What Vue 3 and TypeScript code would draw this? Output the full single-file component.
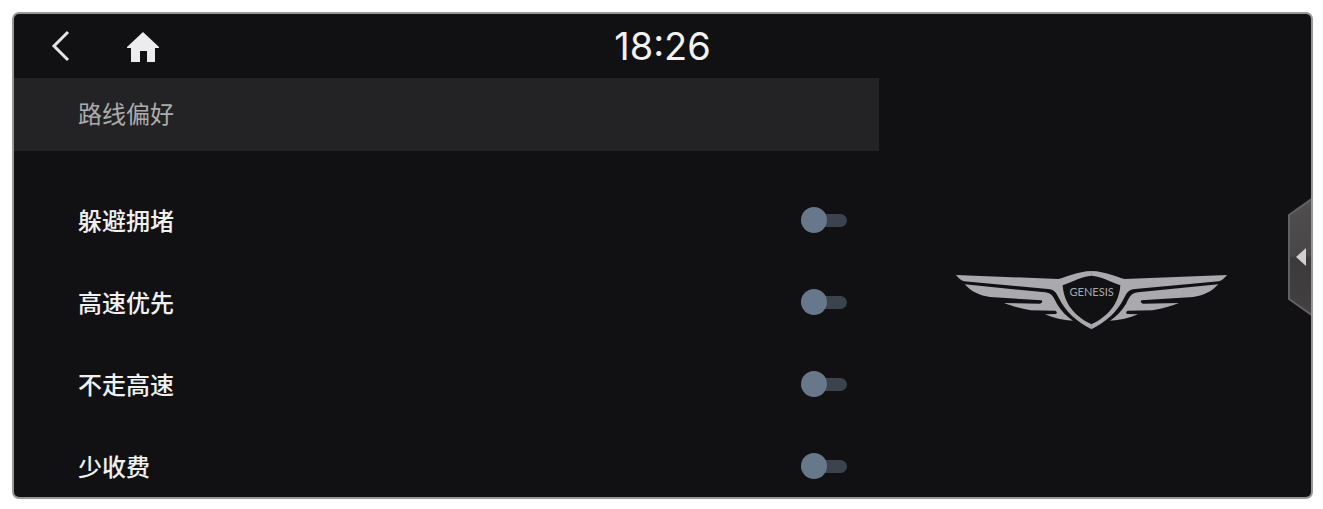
<script setup lang="ts">
import { ref } from 'vue'

interface RouteOption {
  id: string
  label: string
  enabled: boolean
}

const time = ref('18:26')
const options = ref<RouteOption[]>([
  { id: 'avoid-jam', label: '躲避拥堵', enabled: false },
  { id: 'highway-first', label: '高速优先', enabled: false },
  { id: 'no-highway', label: '不走高速', enabled: false },
  { id: 'less-toll', label: '少收费', enabled: false },
])
</script>

<template>
  <div class="screen">
    <header class="topbar">
      <nav class="nav">
        <button type="button" class="icon-button" aria-label="返回">
          <svg width="20" height="32" viewBox="0 0 20 32">
            <path d="M18 2 L4 16 L18 30" fill="none" stroke="#e4e4e4" stroke-width="3" />
          </svg>
        </button>
        <button type="button" class="icon-button" aria-label="主页">
          <svg width="32" height="32" viewBox="0 0 32 32">
            <path d="M16 2 L32 17 V18 H28 V32 H20 V21 H13 V32 H4 V18 H0 V17 Z" fill="#ececec" />
          </svg>
        </button>
      </nav>
      <time class="clock">{{ time }}</time>
    </header>

    <div class="body">
      <main class="settings">
        <h1 class="title">路线偏好</h1>
        <div class="options">
          <div v-for="option in options" :key="option.id" class="option">
            <label :for="option.id">{{ option.label }}</label>
            <input :id="option.id" v-model="option.enabled" type="checkbox" class="switch" />
          </div>
        </div>
      </main>

      <aside class="brand">
        <svg class="logo" viewBox="48 30 813 180" role="img" aria-label="GENESIS">
          <defs>
            <g id="wing">
              <path
                d="M48 45 L355 57 C378 52 412 34 455 33 V47 C425 49 402 63 368 76 C372 132 405 170 455 193 V208 C408 184 378 156 357 115 C348 96 342 89 324 87 L72 64 C61 60 55 54 48 45 Z"
              />
              <path
                d="M74 73 L315 97 C337 100 341 112 351 132 C364 154 380 169 399 182 C370 181 340 174 315 163 L348 162 Q354 157 346 152 L272 151 C245 146 215 138 192 129 L300 131 Q310 128 305 121 L150 111 C119 107 94 95 74 73 Z"
              />
            </g>
          </defs>
          <g fill="#aaa9ae">
            <use href="#wing" />
            <use href="#wing" transform="translate(909 0) scale(-1 1)" />
            <text x="455" y="108" text-anchor="middle" class="wordmark">GENESIS</text>
          </g>
        </svg>
      </aside>
    </div>

    <button type="button" class="drawer" aria-label="展开">
      <svg width="24" height="118" viewBox="0 0 24 118">
        <defs>
          <linearGradient id="drawer-fill" x1="0" y1="0" x2="0" y2="1">
            <stop offset="0" stop-color="#514e4f" />
            <stop offset="0.490" stop-color="#494647" />
            <stop offset="0.510" stop-color="#3b393a" />
            <stop offset="1" stop-color="#434142" />
          </linearGradient>
        </defs>
        <path d="M26 0 L2 17 V101 L26 118" fill="url(#drawer-fill)" stroke="#626162" stroke-width="2" />
        <path d="M9 59 L19 50 V68 Z" fill="#d0d0d0" />
      </svg>
    </button>
  </div>
</template>

<style>
body {
  margin: 0;
  background: #fff;
}
</style>

<style scoped>
.screen {
  position: relative;
  display: flex;
  flex-direction: column;
  box-sizing: border-box;
  height: calc(100vh - 22px);
  margin: 12px 10px 10px 12px;
  overflow: hidden;
  border: 2px solid #999896;
  border-radius: 7px;
  background: #111113;
  color: #f0f0f0;
  font-family: "Noto Sans CJK SC", sans-serif;
}

button {
  display: flex;
  padding: 0;
  border: 0;
  background: none;
  cursor: pointer;
}

.topbar {
  display: grid;
  grid-template-columns: 1fr auto 1fr;
  flex: none;
  align-items: center;
  height: 64px;
}

.nav {
  display: flex;
  align-items: center;
  gap: 57px;
  padding-left: 36px;
}

.clock {
  color: #f2f2f2;
  font: 400 38px/64px Inter, sans-serif;
}

.body {
  display: grid;
  grid-template-columns: 2fr 1fr;
  flex: 1;
  min-height: 0;
}

.settings {
  min-width: 0;
}

.title {
  margin: 0;
  padding: 0 64px 3px;
  background: #232325;
  color: #acacad;
  font-size: 24px;
  font-weight: 400;
  line-height: 70px;
}

.options {
  padding-top: 28px;
}

.option {
  display: flex;
  align-items: center;
  justify-content: space-between;
  height: 82px;
  padding: 0 32px 0 64px;
  font-size: 24px;
  font-weight: 500;
  line-height: 36px;
}

.switch {
  position: relative;
  display: flex;
  align-items: center;
  width: 46px;
  height: 26px;
  margin: 0;
  appearance: none;
  cursor: pointer;
}

.switch::before {
  content: "";
  flex: 1;
  height: 13px;
  border-radius: 7px;
  background: #3b434e;
}

.switch::after {
  content: "";
  position: absolute;
  left: 0;
  width: 26px;
  height: 26px;
  border-radius: 50%;
  background: #66788a;
}

.switch:checked::after {
  right: 0;
  left: auto;
  background: #9fc3e6;
}

.brand {
  display: flex;
  justify-content: center;
  padding: 192px 6px 0 0;
}

.logo {
  width: 271px;
  height: 60px;
}

.wordmark {
  font-family: Lato, sans-serif;
  font-size: 33px;
}

.drawer {
  position: absolute;
  top: 184px;
  right: 0;
}
</style>
